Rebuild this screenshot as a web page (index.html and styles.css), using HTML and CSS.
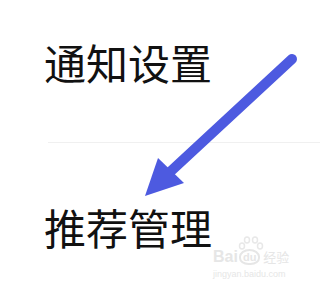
FILE: index.html
```html
<!DOCTYPE html>
<html>
<head>
  <meta charset="UTF-8">
  <title>设置</title>
  <link rel="stylesheet" href="styles.css">
</head>
<body>
  <div class="page">
    <div class="item first">通知设置</div>
    <div class="divider"></div>
    <div class="item second">推荐管理</div>

    <svg class="arrow" width="320" height="288" viewBox="0 0 320 288">
      <line x1="292" y1="59" x2="170" y2="172" stroke="#4d5ae0" stroke-width="10" stroke-linecap="round"/>
      <polygon points="145,196 158,158 184,183" fill="#4d5ae0"/>
    </svg>

    <svg class="paw" width="26" height="14" viewBox="0 0 26 14">
      <g fill="none" stroke="#e8e8e8" stroke-width="1.5">
        <ellipse cx="4" cy="10" rx="2.5" ry="3"/>
        <ellipse cx="9" cy="4" rx="2.5" ry="3"/>
        <ellipse cx="17" cy="4" rx="2.5" ry="3"/>
        <ellipse cx="22" cy="10" rx="2.5" ry="3"/>
      </g>
    </svg>

    <div class="watermark">
      <div class="wm-top">
        <span class="wm-bai">Bai</span>
        <span class="wm-du">du</span>
        <span class="wm-jy">经验</span>
      </div>
      <div class="wm-url">jingyan.baidu.com</div>
    </div>
  </div>
</body>
</html>
```

FILE: styles.css
```css
body {
  margin: 0;
  padding: 0;
  background: #fff;
  font-family: "Noto Sans CJK SC", "Noto Sans", sans-serif;
}

.page {
  position: relative;
  width: 320px;
  height: 288px;
  overflow: hidden;
}

.item {
  padding-left: 44px;
  font-size: 42px;
  line-height: 42px;
  color: #111;
}

.item.first {
  padding-top: 41px;
}

.divider {
  height: 1px;
  background: #f0f0f0;
  margin: 59px 0 0 48px;
}

.item.second {
  padding-top: 63px;
}

.arrow {
  position: absolute;
  left: 0;
  top: 0;
}

.paw {
  position: absolute;
  left: 238px;
  top: 236px;
}

.watermark {
  position: absolute;
  left: 213px;
  top: 249px;
  color: #e6e6e6;
}

.wm-top {
  display: flex;
  align-items: center;
  gap: 1px;
}

.wm-bai {
  font-family: "Liberation Sans", sans-serif;
  font-size: 16px;
  font-weight: bold;
  line-height: 16px;
}

.wm-du {
  font-family: "Liberation Sans", sans-serif;
  font-size: 11px;
  font-weight: bold;
  border: 2px solid #e6e6e6;
  border-radius: 50% 50% 45% 45%;
  padding: 0 2px;
  line-height: 12px;
}

.wm-jy {
  font-size: 13px;
  line-height: 16px;
  margin-left: 2px;
}

.wm-url {
  font-family: "Liberation Sans", sans-serif;
  font-size: 9px;
  line-height: 11px;
  margin-top: 4px;
}
```
